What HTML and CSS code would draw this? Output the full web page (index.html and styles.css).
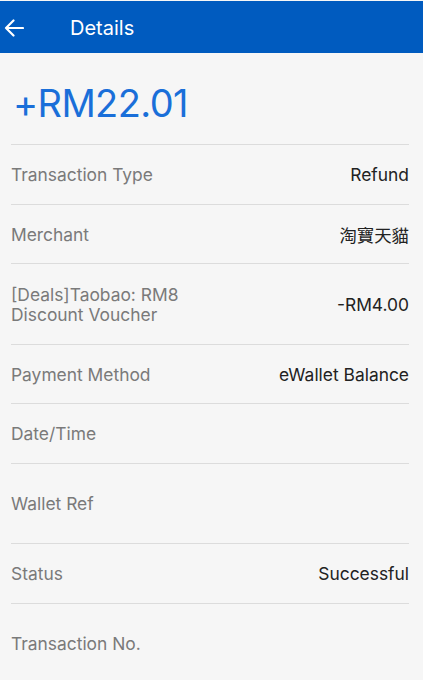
FILE: index.html
```html
<!DOCTYPE html>
<html lang="en">
<head>
  <meta charset="UTF-8" />
  <meta name="viewport" content="width=device-width, initial-scale=1.0"/>
  <title>Details</title>
  <link rel="stylesheet" href="styles.css">
</head>
<body>

  <header class="topbar">
    <a class="back" href="javascript:void(0)">
      <svg width="20" height="18" viewBox="0 0 20 18">
        <path d="M19 9H2M9.5 1.5L2 9l7.5 7.5" fill="none" stroke="#fff" stroke-width="2.2" stroke-linecap="round" stroke-linejoin="round"/>
      </svg>
    </a>
    <h1>Details</h1>
  </header>

  <main class="content">
    <div class="amount">+RM22.01</div>

    <ul class="rows">
      <li class="row"><span class="label">Transaction Type</span><span class="value">Refund</span></li>
      <li class="row"><span class="label">Merchant</span><span class="value cjk">淘寶天貓</span></li>
      <li class="row tall"><span class="label">[Deals]Taobao: RM8<br>Discount Voucher</span><span class="value">-RM4.00</span></li>
      <li class="row"><span class="label">Payment Method</span><span class="value">eWallet Balance</span></li>
      <li class="row"><span class="label">Date/Time</span><span class="value"></span></li>
      <li class="row tall"><span class="label">Wallet Ref</span><span class="value"></span></li>
      <li class="row"><span class="label">Status</span><span class="value">Successful</span></li>
      <li class="row tall"><span class="label">Transaction No.</span><span class="value"></span></li>
    </ul>
  </main>

</body>
</html>
```

FILE: styles.css
```css
body {
  font-family: Inter, 'Noto Sans', sans-serif;
  background: #f6f6f6;
  margin: 0;
  padding: 0;
  overflow: hidden;
}

.topbar {
  display: flex;
  align-items: center;
  height: 52px;
  margin-top: 1px;
  background-color: #005bbf;
  color: #fff;
}

.back {
  display: flex;
  align-items: center;
  padding: 2px 0 0 4px;
  width: 66px;
}

.topbar h1 {
  margin: 0;
  padding-top: 2px;
  font-size: 20px;
  font-weight: 400;
}

.content {
  padding: 0 14px 0 11px;
}

.amount {
  color: #1a6fd9;
  font-size: 38px;
  font-weight: 400;
  padding: 27px 0 0 2px;
  height: 64px;
  letter-spacing: -0.6px;
}

.rows {
  list-style-type: none;
  margin: 0;
  padding: 0;
  border-top: 1px solid #dcdcdc;
}

.row {
  display: flex;
  justify-content: space-between;
  align-items: center;
  height: 58.5px;
  border-bottom: 1px solid #dcdcdc;
  font-size: 17.4px;
  line-height: 20px;
}

.row.tall {
  height: 79.5px;
}

.label {
  color: #7a7a7a;
  padding-top: 2px;
}

.value {
  color: #222;
  text-align: right;
  padding-top: 2px;
}

.cjk {
  font-family: "Noto Sans CJK TC", sans-serif;
}
```
